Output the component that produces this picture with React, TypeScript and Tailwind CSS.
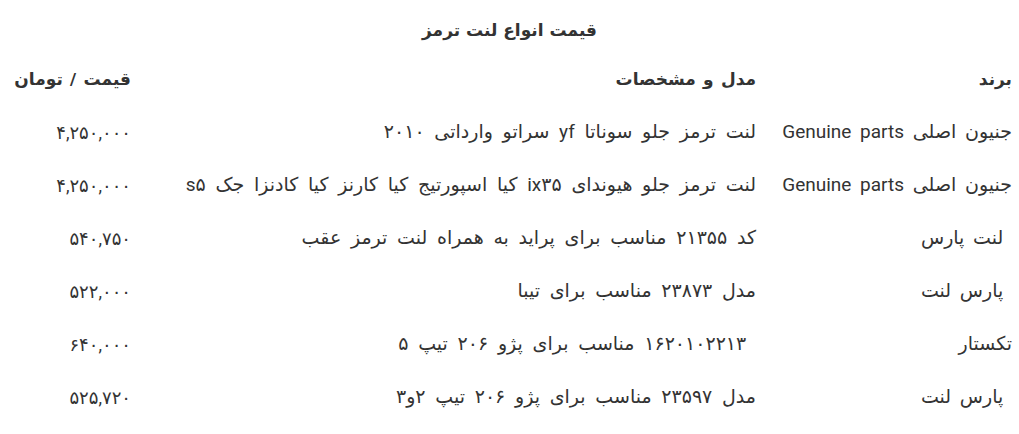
import React from "react";

interface Row {
  brand: string;
  spec: string;
  price: string;
}

// some cells in the source start with a stray space, kept as nbsp
const rows: Row[] = [
  { brand: "جنیون اصلی Genuine parts", spec: "لنت ترمز جلو سوناتا yf سراتو وارداتی ۲۰۱۰", price: "۴,۲۵۰,۰۰۰" },
  { brand: "جنیون اصلی Genuine parts", spec: "لنت ترمز جلو هیوندای ix۳۵ کیا اسپورتیج کیا کارنز کیا کادنزا جک s۵", price: "۴,۲۵۰,۰۰۰" },
  { brand: "\u00a0لنت پارس", spec: "کد ۲۱۳۵۵ مناسب برای پراید به همراه لنت ترمز عقب", price: "۵۴۰,۷۵۰" },
  { brand: "\u00a0پارس لنت", spec: "مدل ۲۳۸۷۳ مناسب برای تیبا", price: "۵۲۲,۰۰۰" },
  { brand: "تکستار", spec: "\u00a0۱۶۲۰۱۰۲۲۱۳ مناسب برای پژو ۲۰۶ تیپ ۵", price: "۶۴۰,۰۰۰" },
  { brand: "\u00a0پارس لنت", spec: "مدل ۲۳۵۹۷ مناسب برای پژو ۲۰۶ تیپ ۲و۳", price: "۵۲۵,۷۲۰" },
];

export default function App() {
  return (
    <div dir="rtl" className="w-[1019px] h-[434px] bg-white text-[#333] overflow-hidden">
      <h2 className="pt-[17px] text-center text-[17px] font-bold font-['DejaVu_Sans',sans-serif] leading-[26px]">
        قیمت انواع لنت ترمز
      </h2>
      <table className="mt-[11px] w-full border-collapse font-['Roboto','DejaVu_Sans',sans-serif] text-[19px] [word-spacing:4px]">
        <thead>
          <tr className="h-[52px] text-[17px] [word-spacing:3px]">
            <th className="w-[255px] pr-[7px] text-right font-bold">برند</th>
            <th className="w-[626px] pr-[8px] text-right font-bold">مدل و مشخصات</th>
            <th className="pr-[7px] text-right font-bold">قیمت / تومان</th>
          </tr>
        </thead>
        <tbody>
          {rows.map((row, i) => (
            <tr key={i} className="h-[53px]">
              <td className="pr-[7px] text-right whitespace-pre">{row.brand}</td>
              <td className="pr-[8px] text-right [word-spacing:5px]">{row.spec}</td>
              <td className="pr-[7px] text-right text-[18px]">{row.price}</td>
            </tr>
          ))}
        </tbody>
      </table>
    </div>
  );
}
